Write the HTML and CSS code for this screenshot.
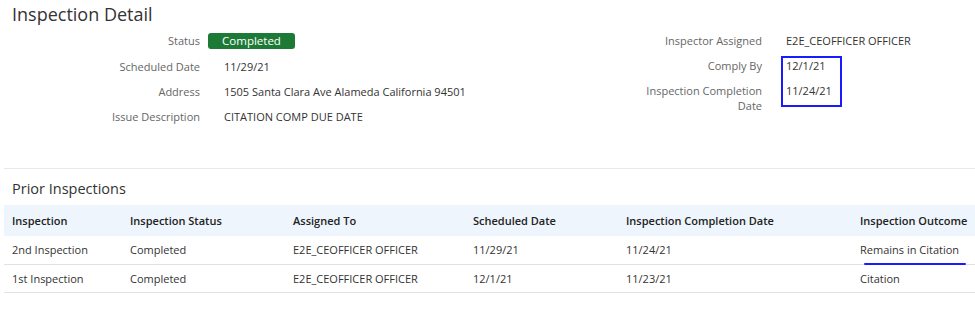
FILE: index.html
```html
<!DOCTYPE html>
<html lang="en">
<head>
    <meta charset="UTF-8">
    <meta name="viewport" content="width=device-width, initial-scale=1.0">
    <title>Inspection Detail</title>
    <link rel="stylesheet" href="styles.css">
</head>
<body>
    <div class="page">
        <!-- 详情 -->
        <section class="detail">
            <h1 class="page-title">Inspection Detail</h1>
            <div class="detail-grid">
                <div class="field-list field-list-left">
                    <div class="field-label">Status</div>
                    <div class="field-value"><span class="status-badge">Completed</span></div>
                    <div class="field-label">Scheduled Date</div>
                    <div class="field-value text">11/29/21</div>
                    <div class="field-label">Address</div>
                    <div class="field-value text">1505 Santa Clara Ave Alameda California 94501</div>
                    <div class="field-label">Issue Description</div>
                    <div class="field-value text">CITATION COMP DUE DATE</div>
                </div>
                <div class="field-list field-list-right">
                    <div class="field-label">Inspector Assigned</div>
                    <div class="field-value">E2E_CEOFFICER OFFICER</div>
                    <div class="field-label">Comply By</div>
                    <div class="field-value">12/1/21</div>
                    <div class="field-label">Inspection Completion Date</div>
                    <div class="field-value">11/24/21</div>
                    <div class="highlight-box"></div>
                </div>
            </div>
        </section>

        <!-- 历史记录 -->
        <section class="prior">
            <h2 class="section-title">Prior Inspections</h2>
            <table class="prior-table">
                <thead>
                    <tr>
                        <th class="col-name">Inspection</th>
                        <th class="col-status">Inspection Status</th>
                        <th class="col-assigned">Assigned To</th>
                        <th class="col-scheduled">Scheduled Date</th>
                        <th class="col-completed">Inspection Completion Date</th>
                        <th class="col-outcome">Inspection Outcome</th>
                    </tr>
                </thead>
                <tbody>
                    <tr>
                        <td>2nd Inspection</td>
                        <td>Completed</td>
                        <td>E2E_CEOFFICER OFFICER</td>
                        <td>11/29/21</td>
                        <td>11/24/21</td>
                        <td><span class="marked">Remains in Citation</span></td>
                    </tr>
                    <tr>
                        <td>1st Inspection</td>
                        <td>Completed</td>
                        <td>E2E_CEOFFICER OFFICER</td>
                        <td>12/1/21</td>
                        <td>11/23/21</td>
                        <td>Citation</td>
                    </tr>
                </tbody>
            </table>
        </section>
    </div>
</body>
</html>
```

FILE: styles.css
```css
* {
    margin: 0;
    padding: 0;
    box-sizing: border-box;
}

body {
    background: #ffffff;
    color: #333333;
    font-family: "Open Sans", "Noto Sans", sans-serif;
    font-size: 11px;
}

.page {
    padding-left: 4px;
}

.page-title {
    font-size: 18px;
    font-weight: 400;
    color: #333333;
    line-height: 28px;
    padding-left: 8px;
}

.detail {
    height: 169px;
    border-bottom: 1px solid #e8e8e8;
}

.detail-grid {
    display: grid;
    grid-template-columns: 628px 1fr;
    align-items: start;
}

.field-list {
    display: grid;
    align-items: start;
    align-content: start;
    column-gap: 24px;
}

.field-list-left {
    grid-template-columns: 196px 1fr;
    column-gap: 8px;
}

.field-list-right {
    grid-template-columns: 130px 1fr;
    position: relative;
}

.field-label,
.field-value {
    line-height: 15px;
    padding: 5px 0;
    min-height: 25px;
}

.field-label {
    text-align: right;
    color: #666666;
}

.field-value {
    color: #333333;
}

.field-value.text {
    padding-left: 16px;
}

.status-badge {
    display: inline-block;
    width: 87px;
    height: 16px;
    line-height: 16px;
    text-align: center;
    background: #1d7a36;
    color: #ffffff;
    border-radius: 3px;
    font-size: 11.5px;
}

/* 标注框 */
.highlight-box {
    position: absolute;
    left: 149px;
    top: 28px;
    width: 61px;
    height: 51px;
    border: 2px solid #1a1aff;
}

.prior {
    padding-top: 9px;
}

.section-title {
    font-size: 14.5px;
    font-weight: 400;
    color: #333333;
    line-height: 22px;
    padding-left: 8px;
    margin-bottom: 5px;
}

.prior-table {
    width: 100%;
    border-collapse: collapse;
    table-layout: fixed;
}

.prior-table th,
.prior-table td {
    text-align: left;
    padding: 0 8px;
    white-space: nowrap;
}

.prior-table th {
    background: #eef5fc;
    height: 31px;
    font-weight: 600;
    color: #222222;
}

.prior-table td {
    height: 28px;
    border-bottom: 1px solid #e2e2e2;
    color: #333333;
}

.col-name { width: 118px; }
.col-status { width: 163px; }
.col-assigned { width: 180px; }
.col-scheduled { width: 153px; }
.col-completed { width: 234px; }

.marked {
    position: relative;
}

.marked::after {
    content: '';
    position: absolute;
    left: 4px;
    right: -7px;
    bottom: -8px;
    height: 2px;
    background: #1a1aff;
    border-radius: 1px;
}
```
